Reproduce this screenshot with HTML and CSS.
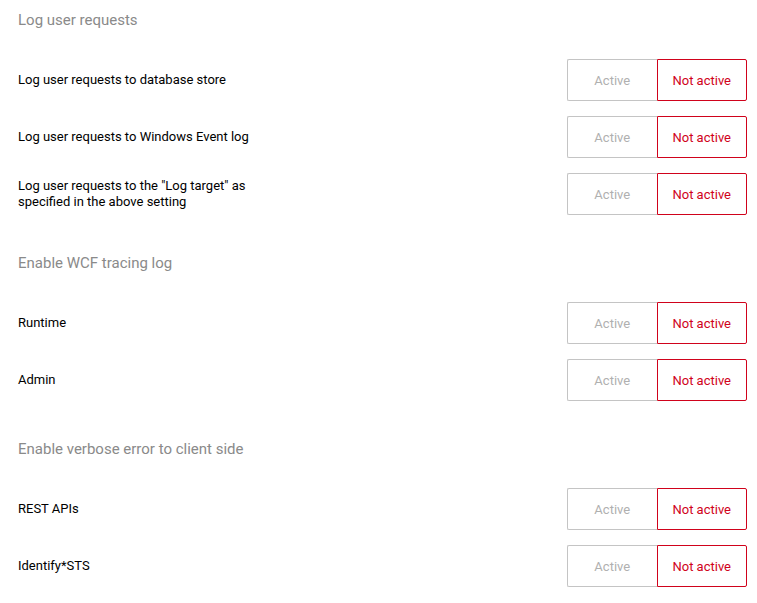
FILE: index.html
```html
<!DOCTYPE html>
<html lang="en">
<head>
  <meta charset="UTF-8"/>
  <title>Logging settings</title>
  <link rel="stylesheet" href="styles.css">
</head>
<body>
<div class="settings">

  <div class="section">
    <h2 class="section-title">Log user requests</h2>
    <div class="row">
      <div class="label">Log user requests to database store</div>
      <div class="toggle"><span class="opt">Active</span><span class="opt on">Not active</span></div>
    </div>
    <div class="row">
      <div class="label">Log user requests to Windows Event log</div>
      <div class="toggle"><span class="opt">Active</span><span class="opt on">Not active</span></div>
    </div>
    <div class="row">
      <div class="label">Log user requests to the "Log target" as specified in the above setting</div>
      <div class="toggle"><span class="opt">Active</span><span class="opt on">Not active</span></div>
    </div>
  </div>

  <div class="section">
    <h2 class="section-title">Enable WCF tracing log</h2>
    <div class="row">
      <div class="label">Runtime</div>
      <div class="toggle"><span class="opt">Active</span><span class="opt on">Not active</span></div>
    </div>
    <div class="row">
      <div class="label">Admin</div>
      <div class="toggle"><span class="opt">Active</span><span class="opt on">Not active</span></div>
    </div>
  </div>

  <div class="section">
    <h2 class="section-title">Enable verbose error to client side</h2>
    <div class="row">
      <div class="label">REST APIs</div>
      <div class="toggle"><span class="opt">Active</span><span class="opt on">Not active</span></div>
    </div>
    <div class="row">
      <div class="label">Identify*STS</div>
      <div class="toggle"><span class="opt">Active</span><span class="opt on">Not active</span></div>
    </div>
  </div>

</div>
</body>
</html>
```

FILE: styles.css
```css
body {
  font-family: Roboto, 'Liberation Sans', sans-serif;
  margin: 0;
  background-color: #fff;
  color: #111;
}
.settings {
  padding: 10px 10px 0 18px;
}
.section {
  margin-bottom: 38px;
}
.section-title {
  margin: 0 0 29px 0;
  font-size: 15px;
  line-height: 20px;
  font-weight: normal;
  color: #8a8a8a;
}
.row {
  display: flex;
  align-items: center;
  justify-content: space-between;
  height: 42px;
  margin-bottom: 15px;
}
.label {
  font-size: 13px;
  line-height: 16px;
  max-width: 262px;
  color: #000;
}
.toggle {
  display: flex;
  width: 180px;
  height: 42px;
}
.opt {
  flex: 1;
  display: flex;
  align-items: center;
  justify-content: center;
  font-size: 13px;
  color: #b0b0b0;
  border: 1px solid #c4c4c4;
  border-right: none;
  border-radius: 2px 0 0 2px;
}
.opt.on {
  color: #d0021b;
  border: 1px solid #d0021b;
  border-radius: 0 2px 2px 0;
}
```
